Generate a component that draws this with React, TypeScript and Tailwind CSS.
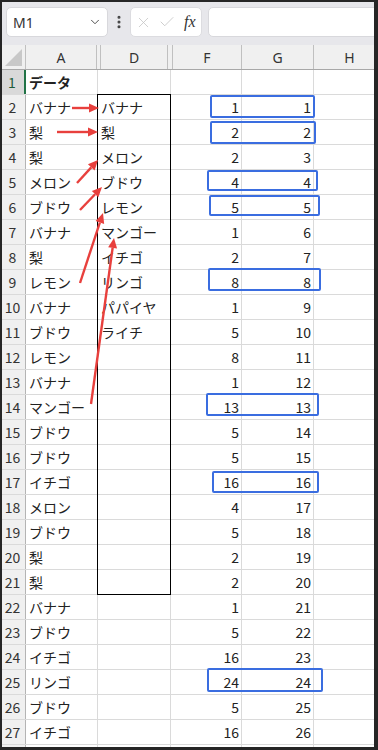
import React from 'react';
import { ChevronDown, EllipsisVertical, X, Check } from 'lucide-react';

const colA = [
  'バナナ', '梨', '梨', 'メロン', 'ブドウ', 'バナナ', '梨', 'レモン', 'バナナ', 'ブドウ',
  'レモン', 'バナナ', 'マンゴー', 'ブドウ', 'ブドウ', 'イチゴ', 'メロン', 'ブドウ', '梨', '梨',
  'バナナ', 'ブドウ', 'イチゴ', 'リンゴ', 'ブドウ', 'イチゴ',
];
const colD = ['バナナ', '梨', 'メロン', 'ブドウ', 'レモン', 'マンゴー', 'イチゴ', 'リンゴ', 'パパイヤ', 'ライチ'];
const colF = [1, 2, 2, 4, 5, 1, 2, 8, 1, 5, 8, 1, 13, 5, 5, 16, 4, 5, 2, 2, 1, 5, 16, 24, 5, 16];

// blue boxes: x1, y1, x2, y2
const boxes = [
  [210, 95, 315, 118],
  [210, 121, 316, 144],
  [207, 170, 318, 191],
  [209, 195, 320, 216],
  [208, 268, 321, 291],
  [206, 393, 319, 416],
  [212, 471, 319, 493],
  [207, 668, 323, 692],
];

// red arrows: from -> tip
const arrows = [
  [72, 108, 99, 108],
  [57, 132, 98, 132],
  [77, 183, 98, 160],
  [80, 210, 102, 187],
  [80, 283, 103, 213],
  [91, 404, 114, 238],
];

const jp = "font-['Noto_Sans_CJK_JP','Noto_Sans',sans-serif]";

function Arrow({ x1, y1, x2, y2 }: { x1: number; y1: number; x2: number; y2: number }) {
  const dx = x2 - x1;
  const dy = y2 - y1;
  const len = Math.sqrt(dx * dx + dy * dy);
  const ux = dx / len;
  const uy = dy / len;
  const bx = x2 - ux * 10;
  const by = y2 - uy * 10;
  const nx = -uy * 4.5;
  const ny = ux * 4.5;
  return (
    <g>
      <line x1={x1} y1={y1} x2={bx} y2={by} stroke="#e8403d" strokeWidth={2.4} />
      <polygon points={`${x2},${y2} ${bx + nx},${by + ny} ${bx - nx},${by - ny}`} fill="#e8403d" />
    </g>
  );
}

function Row({ n }: { n: number }) {
  const first = n === 1;
  // row 28 only peeks out under the window edge, so it stays empty
  const blank = n > 27;
  const a = blank ? '' : first ? 'データ' : colA[n - 2];
  const d = n >= 2 && n <= 11 ? colD[n - 2] : '';
  const f = first || blank ? '' : colF[n - 2];
  const g = first || blank ? '' : n - 1;
  return (
    <div className={`flex h-[25px] shrink-0 border-b border-[#dadada] text-[14px] text-[#222] ${jp}`}>
      <div
        className={`w-[26px] shrink-0 flex items-center justify-center border-r ${
          first ? 'bg-[#d9d9d9] border-r-2 border-[#217346] text-[#1e5c38]' : 'bg-[#f0f0f0] border-[#b4b4b4] text-[#333]'
        }`}
      >
        {blank ? '' : n}
      </div>
      <div className={`w-[72px] shrink-0 border-r border-[#dadada] pl-[3px] flex items-center whitespace-nowrap ${first ? 'font-bold' : ''}`}>
        {a}
      </div>
      <div className="w-[73px] shrink-0 border-r border-[#dadada] pl-[3px] flex items-center whitespace-nowrap">{d}</div>
      <div className="w-[71px] shrink-0 border-r border-[#dadada] pr-[2px] flex items-center justify-end">{f}</div>
      <div className="w-[72px] shrink-0 border-r border-[#dadada] pr-[2px] flex items-center justify-end">{g}</div>
      <div className="w-[72px] shrink-0 border-r border-[#dadada]" />
    </div>
  );
}

export default function App() {
  const rows = Array.from({ length: 28 }, (_, i) => i + 1);
  return (
    <div className="relative w-[378px] h-[750px] overflow-hidden bg-white">
      {/* formula bar */}
      <div className="h-[45px] bg-[#e7e7eb] flex items-start pt-[7px] pl-[6px]">
        <div className="w-[102px] h-[30px] shrink-0 rounded-[5px] bg-white border border-[#d8d8dc] flex items-center justify-between pl-[6px] pr-[5px]">
          <span className="text-[14px] text-[#333] font-['Noto_Sans',sans-serif]">M1</span>
          <ChevronDown size={14} strokeWidth={1.6} className="text-[#444]" />
        </div>
        <div className="w-[22px] h-[30px] shrink-0 flex items-center justify-center">
          <EllipsisVertical size={16} strokeWidth={2.6} className="text-[#444]" />
        </div>
        <div className="w-[72px] h-[30px] shrink-0 rounded-[5px] bg-white border border-[#dcdce0] flex items-center pl-[4px] gap-[4px]">
          <X size={17} strokeWidth={1.1} className="text-[#c4c4c4]" />
          <Check size={18} strokeWidth={1.1} className="text-[#c4c4c4] ml-[2px]" />
          <span className="ml-[4px] text-[16px] italic text-[#333] font-['Liberation_Serif',serif] leading-none">fx</span>
        </div>
        <div className="ml-[6px] flex-1 h-[30px] rounded-l-[5px] bg-white border border-[#d8d8dc]" />
      </div>

      {/* column headers */}
      <div className="flex h-[25px] bg-[#f0f0f0] border-b border-[#a8a8a8] text-[14px] text-[#333] font-['Noto_Sans',sans-serif]">
        <div className="w-[26px] shrink-0 border-r border-[#c0c0c0] flex items-end justify-end pr-[3px] pb-[3px]">
          <svg width="17" height="17" viewBox="0 0 17 17">
            <polygon points="17,0 17,17 0,17" fill="#c8c8c8" />
          </svg>
        </div>
        <div className="w-[71px] shrink-0 border-r border-[#c0c0c0] flex items-center justify-center">A</div>
        <div className="w-[4px] shrink-0 border-r border-[#c0c0c0]" />
        <div className="w-[67px] shrink-0 border-r border-[#c0c0c0] flex items-center justify-center">D</div>
        <div className="w-[5px] shrink-0 border-r border-[#c0c0c0]" />
        <div className="w-[69px] shrink-0 border-r border-[#c0c0c0] flex items-center justify-center">F</div>
        <div className="w-[72px] shrink-0 border-r border-[#c0c0c0] flex items-center justify-center">G</div>
        <div className="w-[72px] shrink-0 border-r border-[#c0c0c0] flex items-center justify-center">H</div>
      </div>

      {/* grid */}
      <div className="flex flex-col">
        {rows.map((n) => (
          <Row key={n} n={n} />
        ))}
      </div>

      {/* D2:D21 black outline */}
      <div className="absolute left-[97px] top-[94px] w-[74px] h-[501px] border border-black pointer-events-none" />

      {/* blue boxes */}
      {boxes.map(([x1, y1, x2, y2], i) => (
        <div
          key={i}
          className="absolute border-2 border-[#3a6de0] rounded-[2px] pointer-events-none"
          style={{ left: x1, top: y1, width: x2 - x1, height: y2 - y1 }}
        />
      ))}

      {/* red arrows */}
      <svg className="absolute left-0 top-0 pointer-events-none" width="378" height="750">
        {arrows.map(([x1, y1, x2, y2], i) => (
          <Arrow key={i} x1={x1} y1={y1} x2={x2} y2={y2} />
        ))}
      </svg>

      {/* window frame */}
      <div className="absolute inset-0 border-t-2 border-l-2 border-r-4 border-b-[3px] border-[#262626] pointer-events-none" />
    </div>
  );
}
